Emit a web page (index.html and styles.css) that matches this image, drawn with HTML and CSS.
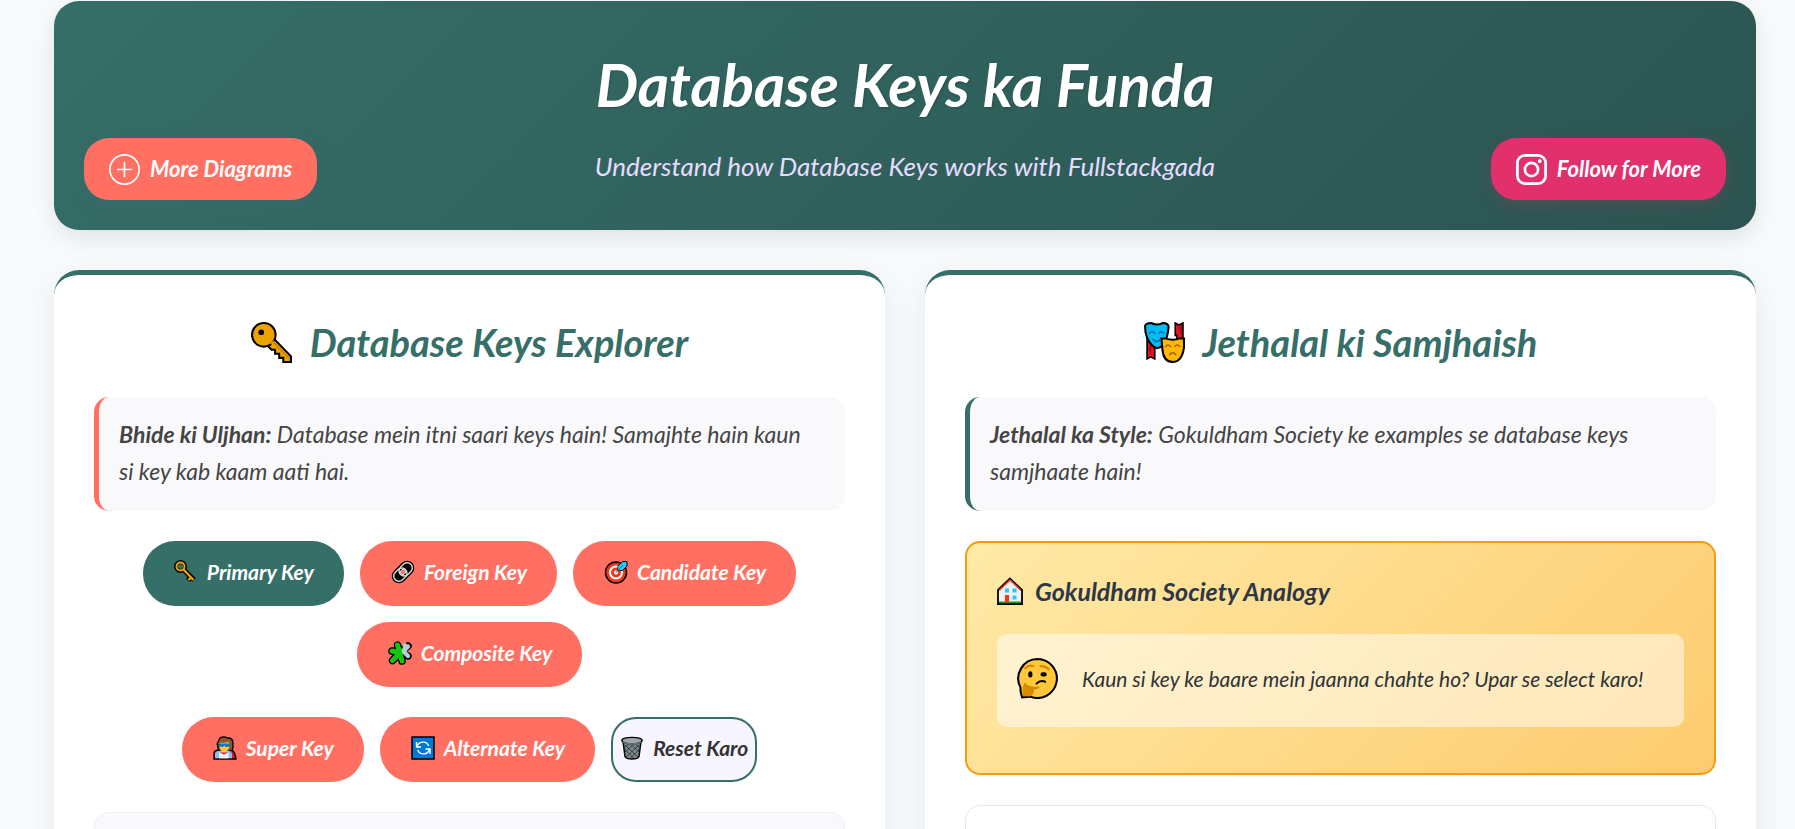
FILE: index.html
```html
<!DOCTYPE html>
<html lang="en">
<head>
<meta charset="utf-8">
<meta name="viewport" content="width=device-width, initial-scale=1">
<title>Database Keys ka Funda</title>
<link rel="stylesheet" href="styles.css">
</head>
<body>
<div class="page">
  <header class="hero">
    <h1 class="hero-title">Database Keys ka Funda</h1>
    <p class="hero-subtitle">Understand how Database Keys works with Fullstackgada</p>
    <a class="pill pill-more" href="#more">
      <svg class="pill-icon" viewBox="0 0 31 31" fill="none" stroke="#fff" stroke-linecap="round" aria-hidden="true"><circle cx="15.5" cy="15.5" r="14.6" stroke-width="1.7"/><path d="M15.5 8.5v14M8.5 15.5h14" stroke-width="1.7"/></svg>
      More Diagrams
    </a>
    <a class="pill pill-follow" href="#follow">
      <svg class="pill-icon" viewBox="0 0 31 31" fill="none" stroke="#fff" aria-hidden="true"><rect x="1.4" y="1.4" width="28.2" height="28.2" rx="7.6" stroke-width="2.8"/><circle cx="15.5" cy="15.5" r="6.6" stroke-width="2.7"/><circle cx="23.7" cy="7.2" r="1.9" fill="#fff" stroke="none"/></svg>
      Follow for More
    </a>
  </header>

  <main class="columns">
    <section class="panel">
      <h2 class="panel-title">
        <svg class="icon-large" viewBox="0 0 40 40" aria-hidden="true"><path d="M23 17l16 16.500v5.500h-7.500v-4h-4v-4h-4v-4h-3.500l-4-4z" fill="#eba301" stroke="#000" stroke-width="2"/><circle cx="12.500" cy="12.500" r="11.500" fill="#eba301" stroke="#000" stroke-width="2"/><path d="M19 21l3-3 15 15.500v4z" fill="#eba301"/><path d="M22 20l15.500 16" stroke="#c98700" stroke-width="1.500"/><circle cx="10" cy="10" r="2.800"/></svg>
        Database Keys Explorer
      </h2>
      <p class="note note-coral"><strong>Bhide ki Uljhan:</strong> Database mein itni saari keys hain! Samajhte hain kaun si key kab kaam aati hai.</p>

      <div class="key-row">
        <button class="key key-active" type="button">
          <svg class="icon-small" viewBox="0 0 24 24" aria-hidden="true"><path d="M9 9l11 11M17 17l-3.200 3.200" stroke="#000" stroke-width="5"/><circle cx="6.500" cy="6.500" r="4.500" fill="none" stroke="#000" stroke-width="4"/><path d="M9.500 9.500l10 10.500M17.500 17l-3 3" stroke="#eba301" stroke-width="2.400"/><circle cx="6.500" cy="6.500" r="4" fill="none" stroke="#eba301" stroke-width="2"/></svg>
          Primary Key
        </button>
        <button class="key" type="button">
          <svg class="icon-small" viewBox="0 0 24 24" fill="none" aria-hidden="true"><g transform="rotate(-45 12 12)"><rect x="-1" y="4.800" width="26" height="14.400" rx="7.200" fill="#000"/><rect x="1" y="6.800" width="14.500" height="10.400" rx="5.200" stroke="#dedede" stroke-width="1.400"/><rect x="8.500" y="6.800" width="14.500" height="10.400" rx="5.200" stroke="#dedede" stroke-width="1.400"/><circle cx="12" cy="12" r="2.600" fill="#ff7062" stroke="#eee" stroke-width=".8"/></g></svg>
          Foreign Key
        </button>
        <button class="key" type="button">
          <svg class="icon-small" viewBox="0 0 24 24" aria-hidden="true"><circle cx="12" cy="12.500" r="10.500" fill="#f03a17" stroke="#000" stroke-width="1.500"/><circle cx="12" cy="12.500" r="6" fill="none" stroke="#fff" stroke-width="2"/><circle cx="12" cy="12.500" r="2" fill="#fff"/><path d="M14 10V6l5-4.500h4V6l-4.500 4.500z" fill="#28c8ff" stroke="#000" stroke-width="1"/><path d="M14.300 9.700V6.200l4.200-3.700h2.500l1 1-.2 2.300-3.600 3.900z" fill="#28c8ff"/><path d="M11.500 13l7.500-8" stroke="#0078d7" stroke-width="1"/></svg>
          Candidate Key
        </button>
        <button class="key" type="button">
          <svg class="icon-small" viewBox="0 0 24 24" aria-hidden="true"><path d="M12 12L9.500 4M12 12l8-7M12 12l8 3M12 12l2 8M12 12l-7.500 7.500M12 12l-8-2" stroke="#000" stroke-width="7.500" stroke-linecap="round"/><path d="M12 12L9.500 4M12 12l2 8M12 12l-7.500 7.500M12 12l-8-2M12 12l5-4" stroke="#16c60c" stroke-width="5" stroke-linecap="round"/><path d="M16 9.500l4-4M16 11l4 4M17 4.500v5" stroke="#b9cdd8" stroke-width="4.400" stroke-linecap="round"/></svg>
          Composite Key
        </button>
      </div>

      <div class="key-row">
        <button class="key" type="button">
          <svg class="icon-small" viewBox="0 0 24 24" stroke="#000" aria-hidden="true"><path d="M1 23v-5q0-4 5-4h12q4 1 5 9z" fill="#e81224" stroke-width="1.400"/><path d="M7 2q3-2 8 0 5 0 5 5v5l-1 2-3 1H7L4.500 11l.5-2-1-1z" fill="#8e562e" stroke-width="1.300"/><path d="M2 22.300v-4q0-3 4-3.500h10q3 1 3 4v3.500z" fill="#81c3f1" stroke="none"/><path d="M6 22.300v-5.800h9.500v5.800z" fill="#f2f2f2" stroke="none"/><path d="M6.500 16.500h9l-4.500 2z" fill="#e81224" stroke="none"/><path d="M6.500 7q5 0 9.500-1v6q-2 4-4.800 4t-4.700-4z" fill="#ffc83d" stroke="none"/><path d="M6 7.500h10.500v3l-4 .5-1.200-1.500L10 11l-4-.5z" fill="#0078d7" stroke="none"/></svg>
          Super Key
        </button>
        <button class="key" type="button">
          <svg class="icon-small" viewBox="0 0 24 24" fill="none" aria-hidden="true"><rect x="1" y="1" width="22" height="22" fill="#0078d7" stroke="#000" stroke-width="1.500"/><path d="M6 11a6.200 6.200 0 0 1 11.800-1M18.500 13a6.200 6.200 0 0 1-11.800 1M5.500 6v5h4.500M19 18v-5h-4.500" stroke="#fff" stroke-width="1.400"/></svg>
          Alternate Key
        </button>
        <button class="key key-reset" type="button">
          <svg class="icon-small" viewBox="0 0 24 24" aria-hidden="true"><path d="M3 5l2 15.500q1 2.500 7 2.500t7-2.500L21 5z" fill="#7b878b" stroke="#000" stroke-width="1.500"/><path d="M5 9l13 12M4.500 13l9 9M9 7l10.500 9M14 7l6 5M19 9L6 21M19.500 13l-9 9M15 7L5 16M10 7l-6 5" stroke="#30383b" stroke-width=".9"/><ellipse cx="12" cy="4.500" rx="10.200" ry="3.200" fill="#9aa6aa" stroke="#000" stroke-width="1.300"/><path d="M3 6q9 4 18 0" fill="none" stroke="#66757a" stroke-width="1.500"/></svg>
          Reset Karo
        </button>
      </div>

      <div class="output"></div>
    </section>

    <section class="panel">
      <h2 class="panel-title">
        <svg class="icon-large" viewBox="0 0 40 40" aria-hidden="true"><g stroke="#000" stroke-width="1.600"><path d="M3 13v23l3.500-2 4 2V22z" fill="#e81224"/><path d="M30.500 1l3.500 2 4-2v16h-6v-4h-1.500z" fill="#e81224"/></g><path d="M4 26l3-5v12zM34 5l3-2v12z" fill="#a80d1a"/><path d="M1 4Q2 1 7 1q6 3 11 0 6 0 6 4-1 12-6 18-5 5-10 0Q1 16 1 4z" fill="#00bcf2" stroke="#000" stroke-width="2"/><path d="M17 16h4q7 2.500 14 0h4v9q-2 14-11 14T18 27z" fill="#ffb900" stroke="#000" stroke-width="2"/><g fill="none" stroke-width="1.400" stroke-linecap="round"><path d="M5.500 11q2.500-3 5 0M14.500 11q2.500-3 5 0M9 17q3.500 4 7 0" stroke="#0067a6"/><path d="M21 24q2.500-3 5 0M30 24q2.500-3 5 0M25 32q3-4 6 0" stroke="#a75b00"/></g></svg>
        Jethalal ki Samjhaish
      </h2>
      <p class="note note-teal"><strong>Jethalal ka Style:</strong> Gokuldham Society ke examples se database keys samjhaate hain!</p>

      <div class="analogy">
        <h3 class="analogy-title">
          <svg class="icon-house" viewBox="0 0 26 28" aria-hidden="true"><path d="M1 27V13L13 1.500 25 13v14z" fill="#f2f2f2" stroke="#000" stroke-width="1.800"/><path d="M2 13.500L13 3l11 10.500" fill="none" stroke="#f03a17" stroke-width="1.500"/><path d="M2 24.500h22v1.800H2z" fill="#13a10e"/><path d="M8 18h4v7.500H8z" fill="#f03a17"/><path d="M8 11.500h4v4H8zM15.500 11.500h4v4h-4zM15.500 18.500h4v4h-4z" fill="#28c8ff"/></svg>
          Gokuldham Society Analogy
        </h3>
        <div class="prompt">
          <svg class="icon-large" viewBox="0 0 40 40" aria-hidden="true"><path d="M20 1a19 19 0 1 1-7 36.700L5 38.500Q3 33 3.500 29A19 19 0 0 1 20 1z" fill="#ffc83d" stroke="#000" stroke-width="2"/><path d="M7 25q1.500-2 2.500 1 6 3 12 1.500 2 2-5 3.500.5 6-5 6.500L6 37q-2-5 1-12z" fill="#d68b00"/><path d="M8 10q4-3.500 8-2M23 8q5 0 8 3" fill="none" stroke="#d68b00" stroke-width="2.200" stroke-linecap="round"/><path d="M19 25q4-4 8.500-1.800" fill="none" stroke="#000" stroke-width="2" stroke-linecap="round"/><rect x="11" y="13" width="4" height="6" rx="2"/><rect x="23" y="14" width="6" height="4" rx="2"/></svg>
          <p class="prompt-text">Kaun si key ke baare mein jaanna chahte ho? Upar se select karo!</p>
        </div>
      </div>

      <div class="details"></div>
    </section>
  </main>
</div>
</body>
</html>
```
FILE: styles.css
```css
* {
  box-sizing: border-box;
}

body {
  margin: 0;
  background: #f8fafc;
  color: #2d3436;
  font-family: Lato, "Open Sans", sans-serif;
  font-style: italic;
}

.page {
  padding: 1px 39px 40px 54px;
}

.hero {
  position: relative;
  padding: 45px 30px 40px;
  border-radius: 25px;
  background: linear-gradient(135deg, #366e68, #2b5450);
  box-shadow: 0 8px 25px rgba(0, 0, 0, 0.1);
  text-align: center;
}

.hero-title {
  margin: 0 0 20px;
  color: #fff;
  font-size: 60px;
  line-height: 76px;
  text-shadow: 1px 1px 2px rgba(0, 0, 0, 0.2);
}

.hero-subtitle {
  margin: 0;
  color: #e6dcff;
  font-size: 26px;
  line-height: 48px;
}

.pill {
  position: absolute;
  bottom: 30px;
  display: flex;
  align-items: center;
  gap: 10px;
  padding: 14px 25px;
  border-radius: 25px;
  color: #fff;
  font-size: 22px;
  font-weight: 700;
  line-height: 34px;
  text-decoration: none;
}

.pill-more {
  left: 30px;
  background: #ff7062;
  box-shadow: 0 4px 15px rgba(54, 110, 120, 0.4);
}

.pill-follow {
  right: 30px;
  background: #e1306c;
  box-shadow: 0 4px 15px rgba(225, 48, 108, 0.2);
}

.pill-icon {
  width: 31px;
  height: 31px;
}

.columns {
  display: grid;
  grid-template-columns: 1fr 1fr;
  gap: 40px;
  margin-top: 40px;
}

.panel {
  padding: 40px;
  border-top: 5px solid #366e68;
  border-radius: 25px;
  background: #fff;
  box-shadow: 0 10px 30px rgba(54, 110, 104, 0.1);
}

.panel-title {
  display: flex;
  align-items: center;
  justify-content: center;
  gap: 18px;
  margin: 0 0 28px;
  color: #366e68;
  font-size: 38px;
  line-height: 54px;
}

.icon-large {
  flex: none;
  width: 41px;
  height: 41px;
}

.note {
  margin: 0 0 30px;
  padding: 19px 32px 21px 20px;
  border-left: 5px solid;
  border-radius: 15px;
  background: #f9f9fc;
  color: #444;
  font-size: 23px;
  line-height: 37px;
}

.note-coral {
  border-color: #ff7062;
}

.note-teal {
  border-color: #366e68;
}

.key-row {
  display: flex;
  flex-wrap: wrap;
  justify-content: center;
  gap: 16px;
  margin-bottom: 30px;
}

.key {
  display: flex;
  align-items: center;
  gap: 9px;
  padding: 15px 30px 18px 31px;
  border: 0;
  border-radius: 32px;
  background: #ff7062;
  color: #fff;
  font: inherit;
  font-size: 21px;
  font-weight: 700;
  line-height: 32px;
}

.key-active {
  background: #366e68;
}

.key-reset {
  padding: 13px 7px 16px;
  border: 2px solid #366e68;
  border-radius: 25px;
  background: #f7f5ff;
  color: #333;
}

.icon-small {
  flex: none;
  width: 24px;
  height: 24px;
}

.output {
  min-height: 200px;
  border: 1px solid #f0eefb;
  border-radius: 15px;
  background: #f9f9fc;
}

.analogy {
  margin-bottom: 30px;
  padding: 30px 30px 46px;
  border: 2px solid #f39c12;
  border-radius: 15px;
  background: linear-gradient(135deg, #ffeaa7, #fdcb6e);
}

.analogy-title {
  display: flex;
  align-items: center;
  gap: 12px;
  margin: 0 0 25px;
  color: #2d3748;
  font-size: 25px;
  line-height: 36px;
}

.icon-house {
  width: 26px;
  height: 28px;
}

.prompt {
  display: flex;
  align-items: center;
  gap: 24px;
  padding: 18px 20px 22px;
  border-radius: 10px;
  background: rgba(255, 255, 255, 0.5);
}

.prompt-text {
  margin: 0;
  font-size: 21px;
  line-height: 53px;
}

.details {
  min-height: 200px;
  border: 1px solid #e2e8f0;
  border-radius: 15px;
  background: #fff;
}
```
